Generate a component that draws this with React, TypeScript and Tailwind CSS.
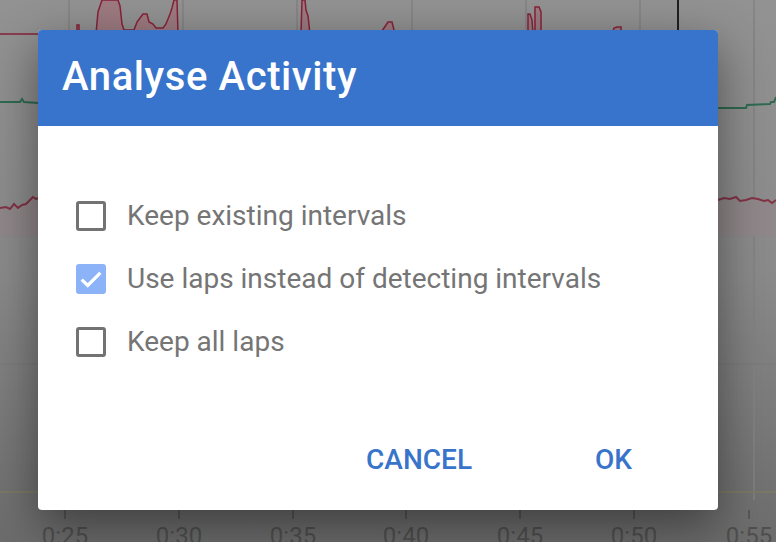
import React from 'react';

const ChartBackdrop: React.FC = () => {
  const grid = [69, 183, 297, 412, 526, 640, 754];
  const ticks = [
    { x: 65, label: '0:25' },
    { x: 179, label: '0:30' },
    { x: 293, label: '0:35' },
    { x: 406, label: '0:40' },
    { x: 520, label: '0:45' },
    { x: 634, label: '0:50' },
    { x: 749, label: '0:55' },
  ];
  const peaks =
    'M0,34 L77,34 L77,25 L79,25 L79,34 L96,34 L98,12 L100,6 L102,0 L118,0 L120,6 L122,24 L124,30 L134,30 L137,22 L140,18 L143,14 L147,14 L149,22 L153,24 L156,28 L163,28 L166,24 L170,14 L172,8 L174,0 L177,0 L178,34 L301,34 L302,0 L305,0 L306,10 L308,16 L310,34 L380,34 L384,28 L388,22 L392,22 L394,30 L396,34 L528,34 L528,14 L530,14 L532,20 L533,34 L535,34 L535,7 L539,7 L541,12 L541,34 L612,34 L614,28 L617,27 L621,27 L621,34 Z';
  const lower =
    'M0,208 L6,207 L10,209 L14,204 L18,208 L22,205 L26,204 L30,200 L33,197 L36,199 L38,198 L718,200 L724,198 L730,199 L736,197 L740,201 L746,200 L752,198 L758,199 L764,201 L768,200 L772,203 L776,200 L776,236 L0,236 Z';
  return (
    <svg className="absolute inset-0" width="776" height="542" viewBox="0 0 776 542">
      {grid.map((x) => (
        <line key={x} x1={x} y1="0" x2={x} y2="500" stroke="#828282" strokeWidth="1.5" />
      ))}
      <line x1="0" y1="236" x2="776" y2="236" stroke="#888" strokeWidth="1" />
      <line x1="0" y1="364" x2="776" y2="364" stroke="#7b7b7b" strokeWidth="1.5" />
      <line x1="0" y1="492" x2="776" y2="492" stroke="#7f7c62" strokeWidth="1.5" />
      <path d={peaks} fill="#9c7a80" stroke="#862238" strokeWidth="1.5" />
      <path d={lower} fill="#8f8789" stroke="none" />
      <path
        d="M0,208 L6,207 L10,209 L14,204 L18,208 L22,205 L26,204 L30,200 L33,197 L36,199 L38,198 M718,200 L724,198 L730,199 L736,197 L740,201 L746,200 L752,198 L758,199 L764,201 L768,200 L772,203 L776,200"
        fill="none"
        stroke="#823346"
        strokeWidth="2"
      />
      <path
        d="M0,102 L20,102 L22,99 L24,102 L38,103 M718,108 L746,108 L747,105 L770,104 L771,102 L774,102 L776,97"
        fill="none"
        stroke="#2f6a52"
        strokeWidth="2"
      />
      <line x1="678" y1="0" x2="678" y2="31" stroke="#202020" strokeWidth="2" />
      {ticks.map((t) => (
        <g key={t.x}>
          <line x1={t.x} y1="510" x2={t.x} y2="519" stroke="#505050" strokeWidth="1.5" />
          <text
            x={t.x}
            y="544"
            textAnchor="middle"
            fill="#505050"
            fontSize="24"
            fontFamily="Roboto, sans-serif"
          >
            {t.label}
          </text>
        </g>
      ))}
    </svg>
  );
};

const Check: React.FC<{ checked?: boolean }> = ({ checked }) =>
  checked ? (
    <div className="w-[30px] h-[30px] rounded-[3px] bg-[#8cb2f7] flex items-center justify-center">
      <svg width="28" height="28" viewBox="0 0 24 24">
        <path d="M4 12.5 L9.2 17.5 L20 6.8" fill="none" stroke="#fff" strokeWidth="2.8" />
      </svg>
    </div>
  ) : (
    <div className="w-[30px] h-[30px] rounded-[3px] border-[3px] border-[#737373]" />
  );

export default function App() {
  const options = [
    { label: 'Keep existing intervals', checked: false },
    { label: 'Use laps instead of detecting intervals', checked: true },
    { label: 'Keep all laps', checked: false },
  ];

  return (
    <div className="relative w-[776px] h-[542px] overflow-hidden bg-[#8c8c8c] font-['Roboto',sans-serif]">
      <div className="absolute inset-0 bg-gradient-to-b from-[#929292] via-[#8a8a8a] to-[#6c6c6c]" />
      <ChartBackdrop />
      <div className="relative pl-[38px] pt-[30px]">
        <div className="w-[680px] h-[480px] rounded-[4px] overflow-hidden bg-white shadow-[0_16px_48px_rgba(0,0,0,0.45)] flex flex-col">
          <div className="h-[96px] bg-[#3874cb] pl-[24px] pt-[24px]">
            <h1 className="text-[40px] leading-[46px] tracking-[0.6px] font-medium text-white">Analyse Activity</h1>
          </div>
          <div className="flex flex-col pt-[58px] pl-[38px]">
            {options.map((o) => (
              <div key={o.label} className="h-[63px] flex items-center gap-[21px]">
                <Check checked={o.checked} />
                <span className="text-[28px] text-[#757575]">{o.label}</span>
              </div>
            ))}
          </div>
          <div className="flex justify-end items-center gap-[123px] pr-[86px] mt-[66px]">
            <span className="text-[28px] font-medium text-[#3874cb]">CANCEL</span>
            <span className="text-[28px] font-medium text-[#3874cb]">OK</span>
          </div>
        </div>
      </div>
    </div>
  );
}
